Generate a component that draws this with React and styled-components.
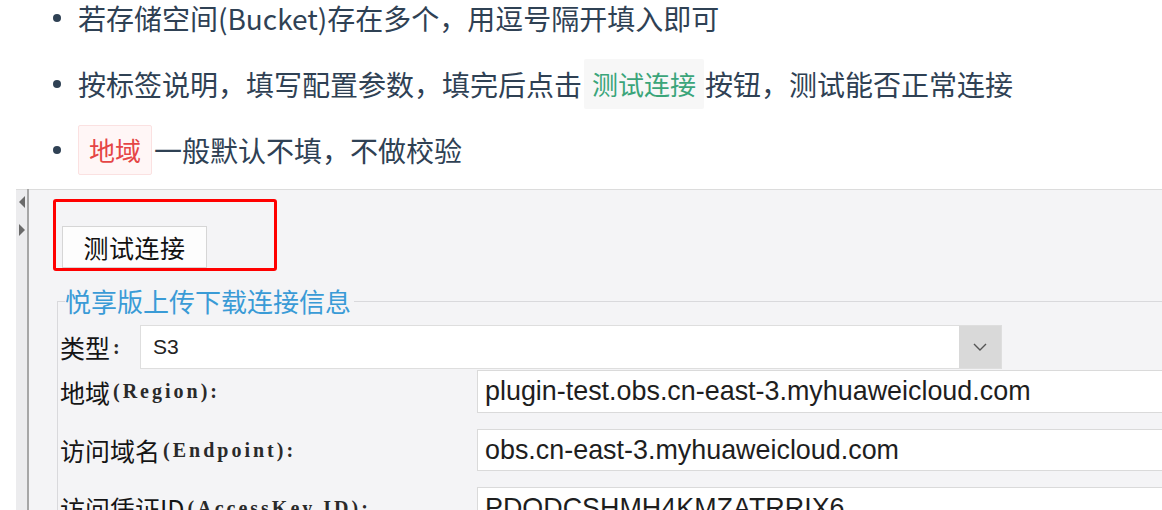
import React from 'react';
import styled, { createGlobalStyle } from 'styled-components';

const Global = createGlobalStyle`
  html, body { margin: 0; padding: 0; background: #fff; }
  body {
    width: 1162px;
    height: 510px;
    overflow: hidden;
    font-family: "Noto Sans CJK SC", "Noto Sans", sans-serif;
  }
`;

const Page = styled.div`
  width: 1162px;
  height: 510px;
  overflow: hidden;
  display: flex;
  flex-direction: column;
`;

const List = styled.ul`
  list-style: none;
  margin: 0;
  padding: 0;
  display: flex;
  flex-direction: column;
  gap: 30px;
  height: 183px;
  flex: none;
`;

const Item = styled.li`
  display: flex;
  align-items: center;
  height: 36px;
  font-size: 28px;
  line-height: 36px;
  color: #2f4154;
  white-space: nowrap;
`;

const Dot = styled.span`
  flex: none;
  width: 8px;
  height: 8px;
  border-radius: 50%;
  background: #2f4154;
  margin: 0 17px 0 53px;
`;

const Code = styled.code`
  display: inline-block;
  font-family: inherit;
  font-size: 26px;
  line-height: 36px;
  padding: 6px ${(p) => (p.$tone === 'danger' ? '10px' : '7px')};
  margin: ${(p) => (p.$tone === 'danger' ? '0 2px 0 0' : '0 1px 0 2px')};
  color: ${(p) => (p.$tone === 'danger' ? '#e54545' : '#3ba57a')};
  background: ${(p) => (p.$tone === 'danger' ? '#fff6f6' : '#f7f7f7')};
  border: 1px solid ${(p) => (p.$tone === 'danger' ? '#fbe1e1' : 'transparent')};
  border-radius: 2px;
`;

const Shot = styled.div`
  flex: 1;
  min-height: 0;
  display: flex;
  padding-top: 6px;
  background: #fff;
`;

const Gutter = styled.div`
  flex: none;
  width: 16px;
  background: #fff;
`;

const Strip = styled.div`
  flex: none;
  width: 11px;
  background: #ececee;
  display: flex;
  flex-direction: column;
  align-items: center;
  padding-top: 6px;
  gap: 16px;
  border-top: 1px solid #dcdcdc;
`;

const Arrow = styled.span`
  width: 0;
  height: 0;
  border-top: 6px solid transparent;
  border-bottom: 6px solid transparent;
  ${(p) =>
    p.$dir === 'left'
      ? 'border-right: 6px solid #6a6a6a;'
      : 'border-left: 6px solid #6a6a6a;'}
`;

const Divider = styled.div`
  flex: none;
  width: 2px;
  background: #a6a6a6;
`;

const Panel = styled.div`
  flex: 1;
  min-width: 0;
  overflow: hidden;
  background: #f4f4f6;
  border-top: 1px solid #dcdcdc;
  padding: 9px 0 0 24px;
  display: flex;
  flex-direction: column;
  align-items: flex-start;
`;

const Highlight = styled.div`
  box-sizing: border-box;
  width: 224px;
  height: 74px;
  border: 3px solid #ff0000;
  border-radius: 3px;
  padding: 24px 0 0 6px;
`;

const WinButton = styled.div`
  box-sizing: border-box;
  width: 145px;
  height: 42px;
  background: #fdfdfd;
  border: 1px solid #d6d6d6;
  display: flex;
  align-items: center;
  justify-content: center;
  font-size: 25px;
  color: #111;
  letter-spacing: 0.5px;
`;

const Group = styled.fieldset`
  align-self: stretch;
  margin: 15px -40px 0 4px;
  padding: 0 0 0 2px;
  border: 1px solid #d9d9dc;
  min-width: 0;
`;

const Legend = styled.legend`
  margin-left: 5px;
  padding: 0 3px 0 0;
  font-size: 26px;
  line-height: 30px;
  color: #3a9bd6;
`;

const Row = styled.div`
  display: flex;
  align-items: center;
  height: ${(p) => p.$h}px;
  margin-top: ${(p) => p.$top}px;
`;

const Label = styled.div`
  flex: none;
  width: ${(p) => p.$w}px;
  display: flex;
  align-items: center;
  white-space: nowrap;
  font-size: 25px;
  color: #151515;
`;

const Paren = styled.span`
  font-family: "Liberation Serif", "DejaVu Serif", serif;
  font-size: 20px;
  font-weight: bold;
  letter-spacing: 3px;
  color: #2a2a2a;
  margin-left: 3px;
`;

const Select = styled.div`
  box-sizing: border-box;
  width: 862px;
  height: 100%;
  display: flex;
  background: #fff;
  border: 1px solid #dedede;
`;

const SelectValue = styled.div`
  flex: 1;
  display: flex;
  align-items: center;
  padding-left: 12px;
  font-family: "Liberation Sans", Arial, sans-serif;
  font-size: 21px;
  color: #222;
`;

const DropBtn = styled.div`
  flex: none;
  width: 42px;
  background: #d9d9d9;
  display: flex;
  align-items: center;
  justify-content: center;
`;

const Input = styled.div`
  box-sizing: border-box;
  flex: 1;
  height: 100%;
  display: flex;
  align-items: center;
  padding-left: 7px;
  background: #fff;
  border: 1px solid #dadada;
  font-family: "Liberation Sans", Arial, sans-serif;
  font-size: 26.9px;
  color: #1e1e1e;
  white-space: nowrap;
  overflow: hidden;
`;

export default function App() {
  return (
    <Page>
      <Global />
      <List>
        <Item>
          <Dot />
          若存储空间(Bucket)存在多个，用逗号隔开填入即可
        </Item>
        <Item>
          <Dot />
          按标签说明，填写配置参数，填完后点击<Code>测试连接</Code>按钮，测试能否正常连接
        </Item>
        <Item>
          <Dot />
          <Code $tone="danger">地域</Code>一般默认不填，不做校验
        </Item>
      </List>
      <Shot>
        <Gutter />
        <Strip>
          <Arrow $dir="left" />
          <Arrow $dir="right" />
        </Strip>
        <Divider />
        <Panel>
          <Highlight>
            <WinButton>测试连接</WinButton>
          </Highlight>
          <Group>
            <Legend>悦享版上传下载连接信息</Legend>
            <Row $h={44} $top={9}>
              <Label $w={80}>
                类型<Paren>:</Paren>
              </Label>
              <Select>
                <SelectValue>S3</SelectValue>
                <DropBtn>
                  <svg width="14" height="8" viewBox="0 0 14 8">
                    <path d="M1 1 L7 7 L13 1" fill="none" stroke="#555" strokeWidth="1.4" />
                  </svg>
                </DropBtn>
              </Select>
            </Row>
            <Row $h={43} $top={1}>
              <Label $w={417}>
                地域<Paren>(Region):</Paren>
              </Label>
              <Input>plugin-test.obs.cn-east-3.myhuaweicloud.com</Input>
            </Row>
            <Row $h={42} $top={16}>
              <Label $w={417}>
                访问域名<Paren>(Endpoint):</Paren>
              </Label>
              <Input>obs.cn-east-3.myhuaweicloud.com</Input>
            </Row>
            <Row $h={42} $top={16}>
              <Label $w={417}>
                访问凭证ID<Paren>(AccessKey ID):</Paren>
              </Label>
              <Input>PDODCSHMH4KMZATRRIX6</Input>
            </Row>
          </Group>
        </Panel>
      </Shot>
    </Page>
  );
}
